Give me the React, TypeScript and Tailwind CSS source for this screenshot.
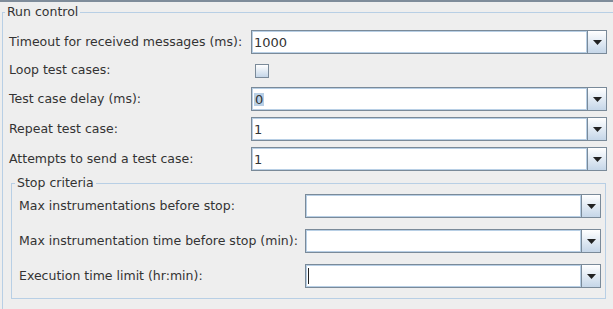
import React from 'react'

const font = "font-['DejaVu_Sans',sans-serif]"

function Arrow() {
  return (
    <svg width="9" height="5" viewBox="0 0 9 5" className="block">
      <path d="M0 0 H9 L4.5 5 Z" fill="#222" />
    </svg>
  )
}

function Combo({
  value,
  width,
  selected,
  caret,
}: {
  value?: string
  width: string
  selected?: boolean
  caret?: boolean
}) {
  return (
    <div className={`flex h-[24px] ${width} shrink-0 border border-[#7a8a99] bg-white`}>
      <div className="flex flex-1 items-center border border-[#b8cfe5] pl-[1px] text-[13px] leading-none text-[#333]">
        {selected ? (
          <span className="bg-[#b8cfe5] px-[1px]">{value}</span>
        ) : caret ? (
          <span className="h-[16px] w-[1px] bg-[#222]" />
        ) : (
          <span>{value}</span>
        )}
      </div>
      <div className="flex w-[19px] items-center justify-center border-l border-[#7a8a99] bg-gradient-to-b from-white to-[#c5d6e8]">
        <Arrow />
      </div>
    </div>
  )
}

function Row({ label, children, labelW }: { label: string; children: React.ReactNode; labelW: string }) {
  return (
    <div className="flex items-center">
      <div className={`${labelW} shrink-0 whitespace-nowrap text-[12.5px] text-[#333]`}>{label}</div>
      {children}
    </div>
  )
}

export default function App() {
  return (
    <div className={`h-[309px] w-[613px] overflow-hidden bg-[#eeeeee] ${font}`}>
      <div className="h-[2px] bg-[#7f8c9a]" />

      {/* Run control */}
      <div className="relative mt-[10px] ml-[2px] h-[400px] border-t border-l border-[#b8cfe5] pt-[17px] pl-[6px]">
        <div className="absolute -top-[9px] left-[2px] bg-[#eeeeee] px-[2px] text-[12.5px] leading-[16px] text-[#333]">
          Run control
        </div>

        <div className="flex flex-col gap-[6px]">
          <Row label="Timeout for received messages (ms):" labelW="w-[242px]">
            <Combo value="1000" width="w-[356px]" />
          </Row>
          <div className="flex h-[21px] items-center">
            <div className="w-[242px] text-[12.5px] text-[#333]">Loop test cases:</div>
            <div className="ml-[4px] h-[14px] w-[14px] border border-[#7a8a99] bg-gradient-to-b from-white to-[#c5d6e8]" />
          </div>
          <Row label="Test case delay (ms):" labelW="w-[242px]">
            <Combo value="0" width="w-[356px]" selected />
          </Row>
          <Row label="Repeat test case:" labelW="w-[242px]">
            <Combo value="1" width="w-[356px]" />
          </Row>
          <Row label="Attempts to send a test case:" labelW="w-[242px]">
            <Combo value="1" width="w-[356px]" />
          </Row>
        </div>

        {/* Stop criteria */}
        <div className="relative mt-[12px] ml-[2px] w-[595px] border border-[#b8cfe5] pt-[10px] pr-[4px] pb-[10px] pl-[7px]">
          <div className="absolute -top-[9px] left-[3px] bg-[#eeeeee] px-[2px] text-[12.5px] leading-[16px] text-[#333]">
            Stop criteria
          </div>
          <div className="flex flex-col gap-[11px]">
            <Row label="Max instrumentations before stop:" labelW="w-[286px]">
              <Combo width="w-[296px]" />
            </Row>
            <Row label="Max instrumentation time before stop (min):" labelW="w-[286px]">
              <Combo width="w-[296px]" />
            </Row>
            <Row label="Execution time limit (hr:min):" labelW="w-[286px]">
              <Combo width="w-[296px]" caret />
            </Row>
          </div>
        </div>
      </div>
    </div>
  )
}
